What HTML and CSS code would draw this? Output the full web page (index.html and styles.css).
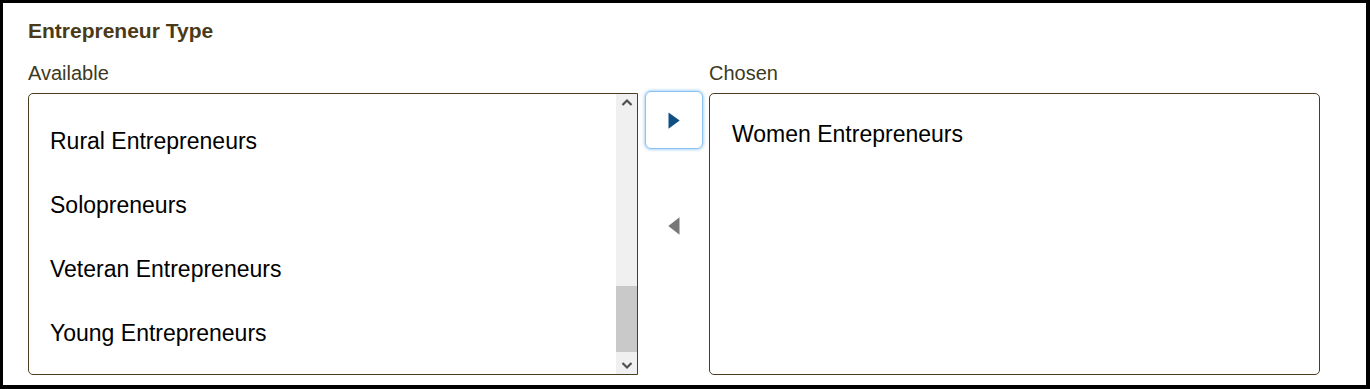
FILE: index.html
```html
<!DOCTYPE html>
<html>
<head>
<meta charset="utf-8">
<link rel="stylesheet" href="styles.css">
</head>
<body>
<div class="frame">
  <div class="title">Entrepreneur Type</div>
  <div class="dual">
    <div class="label">Available</div>
    <div class="spacer"></div>
    <div class="label">Chosen</div>

    <div class="listbox left">
      <ul class="items">
        <li>Rural Entrepreneurs</li>
        <li>Solopreneurs</li>
        <li>Veteran Entrepreneurs</li>
        <li>Young Entrepreneurs</li>
      </ul>
      <div class="scrollbar">
        <div class="arrow">
          <svg width="12" height="9" viewBox="0 0 12 9"><path d="M1.5 7 L6 2.5 L10.5 7" fill="none" stroke="#505050" stroke-width="2.2"/></svg>
        </div>
        <div class="track"><div class="thumb"></div></div>
        <div class="arrow">
          <svg width="12" height="9" viewBox="0 0 12 9"><path d="M1.5 2 L6 6.5 L10.5 2" fill="none" stroke="#505050" stroke-width="2.2"/></svg>
        </div>
      </div>
    </div>

    <div class="buttons">
      <button class="move focus" type="button" aria-label="Move to Chosen">
        <svg width="12" height="17" viewBox="0 0 12 17"><path d="M0.5 0.5 L11.7 8.5 L0.5 16.7 Z" fill="#0e4f84"/></svg>
      </button>
      <button class="move" type="button" aria-label="Move to Available">
        <svg width="12" height="18" viewBox="0 0 12 18"><path d="M11.5 0.3 L0.3 9 L11.5 17.7 Z" fill="#777"/></svg>
      </button>
    </div>

    <div class="listbox right">
      <ul class="items chosen">
        <li>Women Entrepreneurs</li>
      </ul>
    </div>
  </div>
</div>
</body>
</html>
```

FILE: styles.css
```css
* { box-sizing: border-box; }
html, body { margin: 0; padding: 0; background: #fff; }
body { font-family: "Liberation Sans", Arial, sans-serif; }

.frame {
  width: 1370px;
  height: 389px;
  border-style: solid;
  border-color: #000;
  border-width: 3px 4px 4px 3px;
  padding: 16px 0 0 25px;
  background: #fff;
}

.title {
  font-size: 21px;
  font-weight: bold;
  line-height: 24px;
  color: #4a3a17;
}

.dual {
  margin-top: 19px;
  display: grid;
  grid-template-columns: 610px 71px 611px;
  grid-template-rows: 23px 282px;
  row-gap: 8px;
}

.label {
  font-size: 20px;
  line-height: 23px;
  color: #3d3a22;
}

.listbox {
  border: 1px solid #4b3d1f;
  background: #fff;
  display: flex;
  overflow: hidden;
}
.listbox.left { border-radius: 5px 0 0 5px; }
.listbox.right { border-radius: 5px; }

.items {
  list-style: none;
  margin: 0;
  padding: 15px 0 0 21px;
  flex: 1;
  font-size: 23px;
  color: #000;
}
.items li { height: 64px; line-height: 64px; white-space: nowrap; }
.items.chosen { padding: 8px 0 0 22px; }

.scrollbar {
  width: 21px;
  background: #f0f0f0;
  display: flex;
  flex-direction: column;
}
.arrow {
  height: 17px;
  display: flex;
  align-items: center;
  justify-content: center;
}
.track {
  flex: 1;
  display: flex;
  flex-direction: column;
  justify-content: flex-end;
}
.thumb {
  height: 66px;
  background: #c9c9c9;
  margin-bottom: 5px;
}

.buttons {
  padding-left: 7px;
  margin-top: -2px;
  display: flex;
  flex-direction: column;
  gap: 48px;
}
.move {
  width: 58px;
  height: 58px;
  border: 1px solid transparent;
  border-radius: 6px;
  background: #fff;
  padding: 0;
  display: flex;
  align-items: center;
  justify-content: center;
}
.move.focus {
  border-color: #8cc3f2;
  box-shadow: 0 0 3px 1px #b0d6f7;
}
```
